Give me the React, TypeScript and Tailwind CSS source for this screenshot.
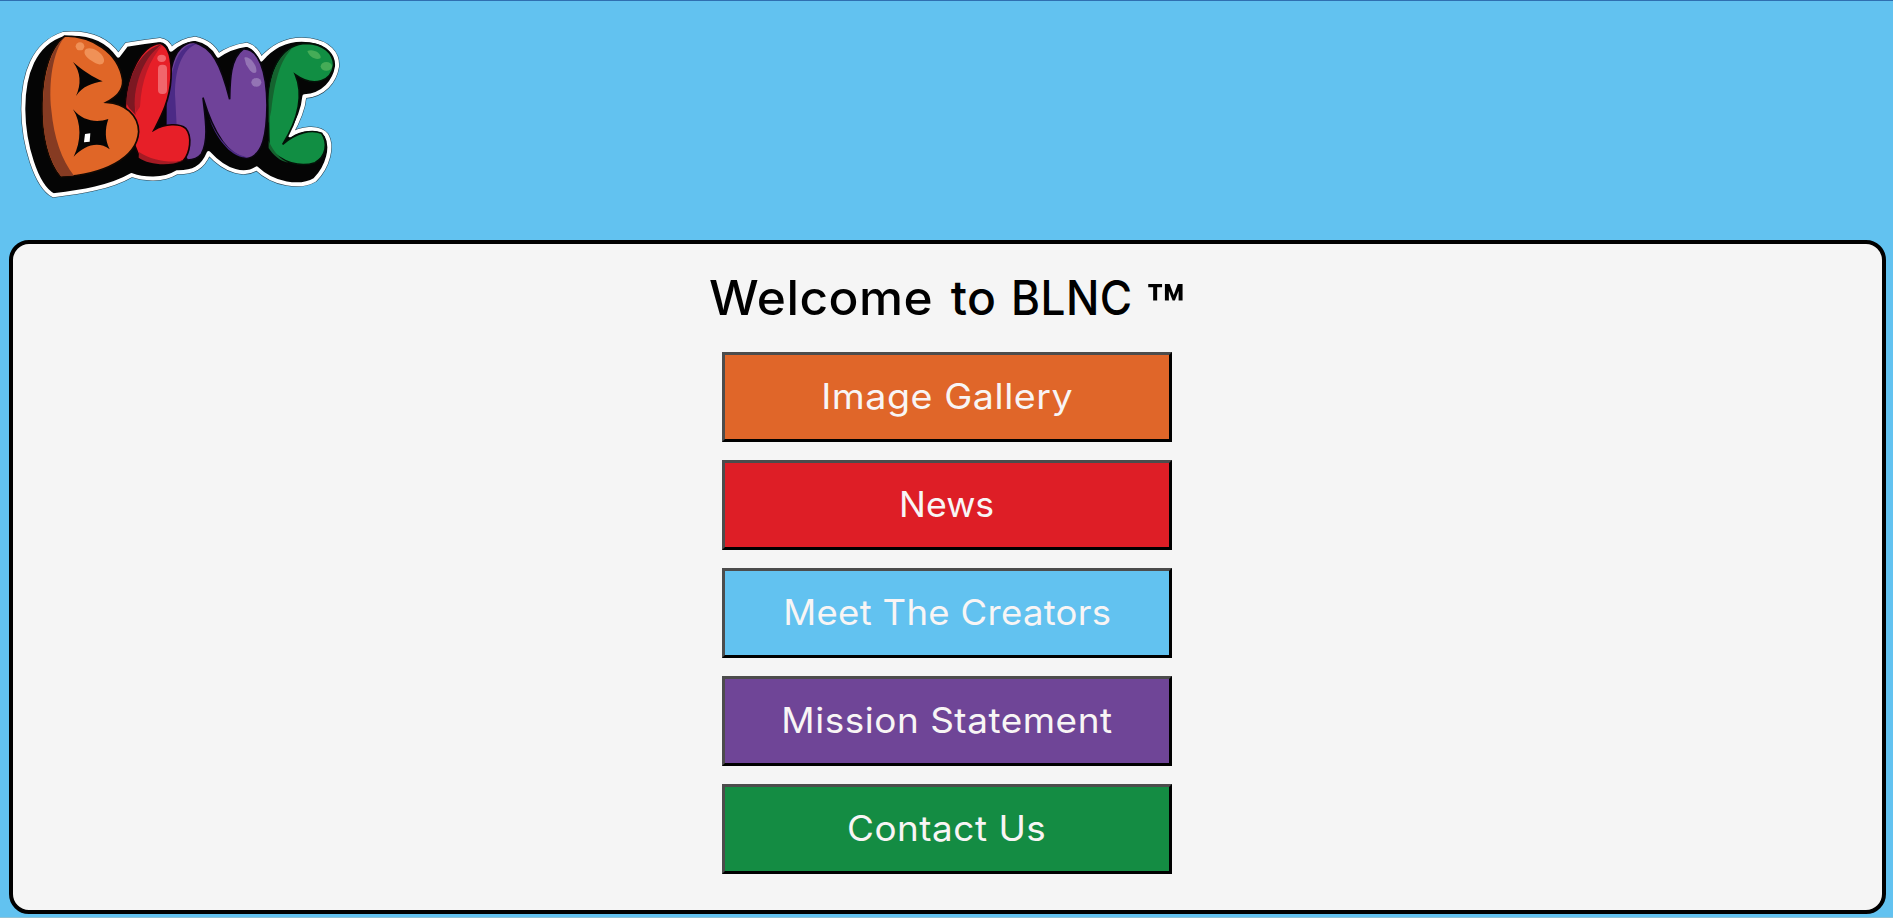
const links = [
  { label: "Image Gallery", color: "bg-[#e06629]", text: "tracking-[0.5px] scale-x-[1.075]" },
  { label: "News", color: "bg-[#de1e26]", text: "scale-x-[1.02]" },
  { label: "Meet The Creators", color: "bg-[#62c2f0]", text: "tracking-[0.3px] scale-x-[1.043]" },
  { label: "Mission Statement", color: "bg-[#6f4597]", text: "tracking-[0.5px] scale-x-[1.055]" },
  { label: "Contact Us", color: "bg-[#148c43]", text: "tracking-[0.5px] scale-x-[1.053]" },
];

const silhouette =
  "M190 102 C260 96 320 116 355 167 L380 134 Q430 126 480 120 Q505 123 513 149 Q545 120 585 116 Q635 126 655 167 Q690 141 740 134 Q770 143 783 179 C830 124 880 114 930 121 C985 129 1014 160 1011 200 C1004 243 972 285 913 289 C910 325 890 372 870 406 C900 386 955 376 979 405 C999 440 984 500 945 539 C900 566 820 553 770 505 C735 528 680 518 626 459 C608 503 580 518 530 517 C490 542 430 538 395 525 C330 563 240 576 160 586 C107 558 71 430 70 330 C69 222 102 131 190 102Z";

function Logo() {
  return (
    <svg className="block h-[220px] w-[360px]" viewBox="0 0 1080 660" role="img" aria-label="BLNC">
      <g strokeLinejoin="round">
        <path d={silhouette} fill="#050505" stroke="#26404f" strokeWidth="15" />
        <path d={silhouette} fill="#050505" stroke="#fff" strokeWidth="12" />
      </g>

      {/* purple */}
      <path d="M514 205 C525 150 555 125 582 127 C635 140 662 190 689 298 C690 245 690 175 730 147 C775 145 800 210 801 315 C800 400 790 468 740 476 C675 465 635 380 609 293 C615 350 628 420 604 462 Q590 480 562 480 L500 380Z" fill="#6f4299" stroke="#0a0611" strokeWidth="5" />
      <path d="M520 205 C535 150 560 130 592 131 C548 145 520 210 526 300 L530 378 L500 378 L500 280Z" fill="#4b2a86" />
      <path d="M628 355 C655 420 695 465 745 472 C695 480 645 410 628 355Z" fill="#4b2a86" />
      <g fill="#9474b5">
        <path d="M733 173 C747 165 772 195 769 215 C760 228 747 209 738 193Z" />
        <ellipse cx="769" cy="247" rx="15" ry="13" />
      </g>

      {/* red */}
      <path d="M376 320 C380 220 425 135 480 130 C510 140 516 180 513 235 C509 305 480 355 462 390 C495 370 540 370 557 385 C578 410 570 460 550 482 C510 500 445 490 417 468 C400 430 385 380 376 320Z" fill="#e71f28" stroke="#120405" strokeWidth="5" />
      <path d="M379 310 C384 215 430 145 486 133 C435 170 395 270 407 345 L388 325Z" fill="#7c1822" />
      <path d="M404 310 C405 230 445 155 488 134 C448 180 424 240 420 320 L407 340Z" fill="#b91b27" />
      <path d="M417 456 C455 482 510 489 548 482 C505 500 446 494 416 473Z" fill="#a41b24" />
      <rect x="474" y="194" width="27" height="88" rx="12" fill="#f1666c" />
      <ellipse cx="485" cy="175" rx="13" ry="11" fill="#f1666c" />

      {/* orange */}
      <path d="M194 108 C275 109 355 155 368 240 C370 275 345 293 319 307 C375 310 415 345 416 395 C411 475 310 525 182 531 C145 490 124 410 126 310 C128 220 150 145 194 108Z" fill="#e06627" stroke="#130903" strokeWidth="5" />
      <path d="M194 110 C158 155 145 250 154 330 C162 415 185 480 222 527 L183 529 C144 480 126 400 129 310 C131 225 151 148 194 110Z" fill="#863b22" />
      <g fill="#050505">
        <path d="M219 186 C247 211 280 232 308 244 C277 249 246 260 228 288 C244 254 243 217 219 186Z" />
        <path d="M219 328 C248 364 291 369 325 357 C314 388 315 421 329 448 C295 421 253 436 221 470 C244 425 245 369 219 328Z" />
      </g>
      <path d="M255 402 L271 400 L269 425 L252 427Z" fill="#fff" />
      <g fill="#f09157">
        <ellipse cx="240" cy="139" rx="13" ry="12" />
        <path d="M254 152 C262 137 296 148 309 170 C319 188 305 199 287 190 C275 181 249 170 254 152Z" />
      </g>

      {/* green */}
      <path d="M804 300 C808 190 855 132 920 130 C970 131 1000 160 1001 195 C995 240 945 266 886 224 C910 280 898 355 848 433 C890 397 935 387 965 400 C985 430 978 470 945 488 C900 503 845 488 807 445Z" fill="#118e43" stroke="#031208" strokeWidth="5" />
      <path d="M806 292 C811 215 840 163 878 143 C839 180 823 250 814 330 L806 370Z" fill="#15632f" />
      <path d="M806 423 C820 455 840 477 865 488 C839 483 819 465 806 444Z" fill="#15632f" />
      <g fill="#45ac57">
        <path d="M922 153 C938 145 964 158 962 174 C950 182 928 172 922 153Z" />
        <ellipse cx="979" cy="199" rx="17" ry="13" />
      </g>
    </svg>
  );
}

export default function App() {
  return (
    <div className="flex h-screen flex-col overflow-hidden border-t border-b border-t-[#2f6fb0] border-b-[#8fc3d8] bg-[#62c2f0] font-['Inter',sans-serif]">
      <header className="-mt-px h-[240px] shrink-0">
        <Logo />
      </header>
      <main className="mr-[7px] ml-[9px] flex h-[674px] shrink-0 flex-col items-center rounded-[20px] border-4 border-black bg-[#f5f5f5] pr-px">
        <h1 className="mt-[22px] flex h-[86px] gap-[14px] text-[48px] leading-[64px] font-medium tracking-[0.5px] whitespace-nowrap text-black">
          <span className="origin-left scale-x-[1.033]">Welcome</span>
          <span className="ml-[11px]">to</span>
          <span className="origin-left scale-x-[0.92]">BLNC</span>
          <span className="-ml-[11px] translate-y-[9px] text-[62px] font-bold tracking-normal">™</span>
        </h1>
        <nav className="flex flex-col gap-[18px]">
          {links.map(({ label, color, text }) => (
            <button
              key={label}
              className={`flex h-[90px] w-[450px] items-center justify-center border-3 border-t-[#4c4c4c] border-r-black border-b-black border-l-[#4c4c4c] pb-[2px] text-[35px] leading-[48px] whitespace-nowrap text-[#f8f5f5] ${color}`}
            >
              <span className={text}>{label}</span>
            </button>
          ))}
        </nav>
      </main>
    </div>
  );
}
